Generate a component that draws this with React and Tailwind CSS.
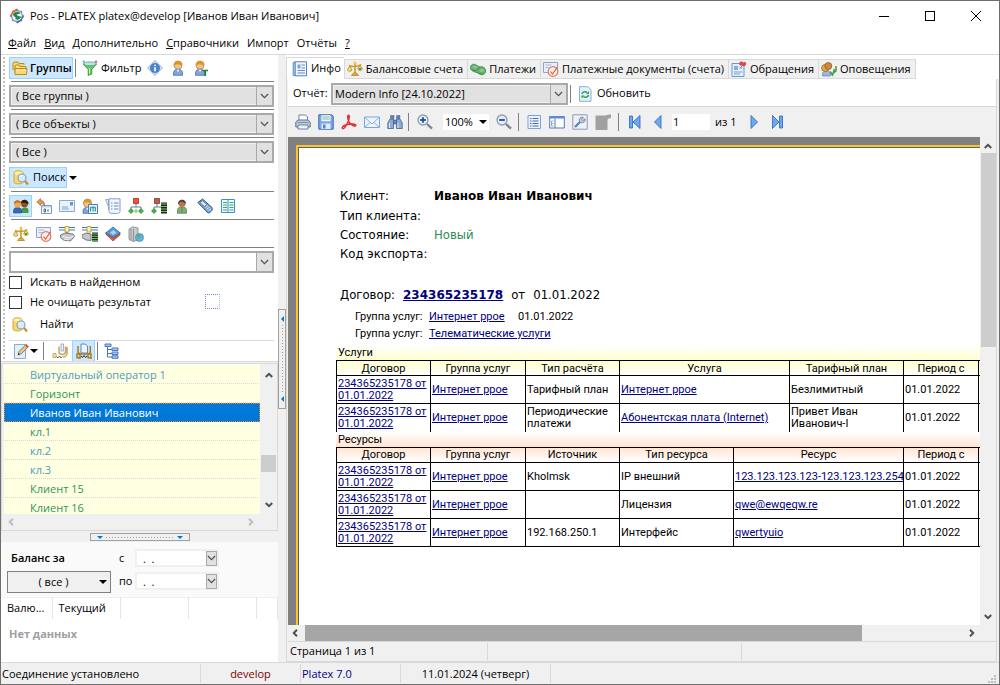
import React, { useState } from 'react';

const Icon = ({ children, size = 'w-4 h-4' }) => (
  <svg viewBox="0 0 16 16" className={`${size} shrink-0`} fill="none" aria-hidden="true">
    {children}
  </svg>
);

const Person = ({ x = 0, hair = '#d9962c', body = '#7fa6e0', face = '#f3c28c' }) => (
  <g transform={`translate(${x} 0)`}>
    <path d="M3.500 15.300V13c0-2.500 2-3.700 4.500-3.700s4.500 1.200 4.500 3.700v2.300z" fill={body} stroke="#3a5f9e" strokeWidth=".7" />
    <path d="M6.500 9.500 8 12l1.500-2.500z" fill="#fff" />
    <circle cx="8" cy="5.300" r="4" fill={face} stroke="#9a6a2a" strokeWidth=".6" />
    <path d="M4 6C3.500 2 6 .6 8.300.8 11.500 1 12.600 3 11.900 6.300 11 4.500 9 4.600 7 4.200 6 4.600 5 4.800 4 6z" fill={hair} />
  </g>
);

const icons = {
  app: (
    <>
      <path d="m8 .5 2.500 2.300h2.700v2.700L15.500 8l-2.300 2.500v2.700h-2.700L8 15.500l-2.500-2.300H2.800v-2.700L.5 8l2.300-2.500V2.800h2.700z" fill="#8a90b4" />
      <path d="M.8 8 4 3l4-2.500L7 6z" fill="#e2552a" />
      <path d="m15.200 8-3 5L8 15.500l1-5.500z" fill="#4a62b4" />
      <circle cx="8" cy="8" r="4.800" fill="#f4f7f4" />
      <path d="M4 6c2-3 6-3 7.500-.5-1.500 0-2.500 1-4 1 1 1.500 3 2 5 2-1 3-4 4-6.500 2.500 1-.5 1-1.500 0-2C5 8.500 4 7.500 4 6z" fill="#1d8a50" />
    </>
  ),
  folders: (
    <>
      <path d="M1 10V3l1-1h4l1 1.500h5V5" fill="#f9d66b" stroke="#b98a1d" />
      <path d="M3 12.500V6l1-1h3l1 1.500h6V8" fill="#fbe08a" stroke="#b98a1d" />
      <path d="M3 14.500V8.500h12l-.5 6z" fill="#fdd76a" stroke="#b98a1d" />
      <path d="M4.500 10h9" stroke="#fff3c0" />
    </>
  ),
  funnel: (
    <>
      <path d="M1 4h13.500L9.800 9.500v4.500L6.200 15.500V9.500z" fill="#6cc45c" stroke="#2f8a3a" strokeWidth=".8" />
      <ellipse cx="7.800" cy="3.800" rx="6.500" ry="1.900" fill="#b4e8f0" stroke="#3c9a6a" strokeWidth=".7" />
      <path d="M7.500 8v5.500" stroke="#c8f5b8" />
      <circle cx="14" cy="1.800" r="1.300" fill="#e457b8" />
      <circle cx="1.800" cy="1.500" r="1.100" fill="#4ab0e0" />
    </>
  ),
  info: (
    <>
      <path d="M8 .6 15.400 8 8 15.400.6 8z" fill="#d9e6f8" stroke="#8fa9d0" />
      <circle cx="8" cy="8" r="4.600" fill="#4c84d8" stroke="#2a5cab" strokeWidth=".6" />
      <path d="M8 4.700v1.400M8 7.200v4" stroke="#fff" strokeWidth="1.700" />
    </>
  ),
  user: <Person />,
  userT: (
    <>
      <Person x={-1} />
      <path d="M9.500 10.500h5.500M12.200 10.500V16" stroke="#118a28" strokeWidth="1.700" />
    </>
  ),
  search: (
    <>
      <path d="M1 3c0-3 9-3 9 0v9c0 2.500-9 2.500-9 0z" fill="#f8d868" stroke="#c79a25" strokeWidth=".8" />
      <ellipse cx="5.500" cy="3" rx="4" ry="1.500" fill="#fff0a8" />
      <circle cx="9" cy="8" r="4" fill="#d5ecfa" stroke="#7f9dba" strokeWidth="1.100" />
      <path d="M7 7c.5-1 1.500-1.500 2.500-1.300" stroke="#fff" />
      <path d="m12 11 3 3.500" stroke="#d58a2a" strokeWidth="2.200" />
    </>
  ),
  people: (
    <>
      <path d="M8 15v-2.500c0-2 1.500-3 4-3s3.500 1 3.500 3V15z" fill="#3f9c4a" />
      <circle cx="11.500" cy="6" r="3.400" fill="#915018" />
      <path d="M8 5c0-4.500 8-4.500 7.500 1.500-2-1.500-4.500-2-7.500-1.500z" fill="#2a1d18" />
      <path d="M.5 15v-2.500c0-2 1.500-3 4-3s4 1 4 3V15z" fill="#3467c0" stroke="#1e3f86" strokeWidth=".5" />
      <circle cx="4.500" cy="6" r="3.500" fill="#f0a950" />
      <path d="M.8 6C.5 1.500 7.800 1 8.200 5.500 5 4 3 4.500.8 6z" fill="#c86c14" />
    </>
  ),
  calBack: (
    <>
      <path d="M5.500 7.500h10v8h-10z" fill="#fff" stroke="#7a9ac8" />
      <path d="M6 8h9v1.500H6z" fill="#bcd0ef" />
      <path d="M8 11h1.500v3H8zM12 11v3" stroke="#345a9e" strokeWidth=".9" />
      <path d="M.8 4 4.500.6V2.500c3 0 4.300 2 4 5-.8-1.500-2-2-4-2v2z" fill="#d99a5e" stroke="#a8682c" strokeWidth=".7" />
    </>
  ),
  mail: (
    <>
      <path d="M.5 2.500h15v11H.5z" fill="#eaf2fd" stroke="#8aa8d0" />
      <path d="M11 4h3v3.500h-3z" fill="#5f97dc" />
      <path d="M3 9h6M3 11h7" stroke="#7aa3da" />
    </>
  ),
  userM: (
    <>
      <Person x={-2.500} />
      <path d="M6.500 6.500h9v9h-9z" fill="#eff6ff" stroke="#4878c0" />
      <path d="M8.500 13.500V9.500c1-.8 2-.6 2.500.3v3.700m0-4c1-.8 2.300-.5 2.300.5v3.500" stroke="#239a90" strokeWidth="1.200" />
    </>
  ),
  docs: (
    <>
      <path d="M.5 1.500h3v10l2 2z" fill="#e6edf8" stroke="#9aaed2" />
      <path d="M4 .8h11v12.500c0 2-2 2-2.500 2H6c-1.500 0-2-1-2-2z" fill="#f5f9ff" stroke="#7f9bcc" />
      <path d="M6 5h1.500M9 5h4.500M6 8h1.500M9 8h4.500M6 11h1.500M9 11h4.500" stroke="#5f84c2" />
    </>
  ),
  tree: (
    <>
      <path d="M8 6v3M3 12V9h10v3" stroke="#6b7c94" />
      <path d="M5.500.5h5v5h-5z" fill="#f0503a" stroke="#a82a1a" strokeWidth=".8" />
      <path d="m3 10 3 3-3 3-3-3zM13 10l3 3-3 3-3-3z" fill="#49a94c" />
      <path d="m8 10.500 2 2.500-2 2.500L6 13z" fill="#8fd28e" />
    </>
  ),
  treeList: (
    <>
      <path d="M6 6v3H3v3M6 9h4" stroke="#6b7c94" />
      <path d="M3.500.5h5v5h-5z" fill="#b5604a" stroke="#7a3524" strokeWidth=".8" />
      <path d="m3 10 3 3-3 3-3-3z" fill="#49a94c" />
      <path d="M10 4.500h6v11h-6z" fill="#222" />
      <path d="M10 6h6M10 8.500h6M10 11h6M10 13.500h6" stroke="#6fce5a" strokeWidth="1.200" />
    </>
  ),
  agent: (
    <>
      <path d="M3.500 15.300V12c0-2 1.500-3 4.500-3s4.500 1 4.500 3v3.300z" fill="#6fb873" stroke="#2c7434" strokeWidth=".6" />
      <path d="M8 9.500v5" stroke="#e04040" />
      <circle cx="8" cy="5.500" r="3.600" fill="#b8774c" />
      <path d="M4 6.500C3.500 0 12.500 0 12 6.500 11 4 9 4.500 6.500 3.800 5.500 4.500 5 5.500 4 6.500z" fill="#4a4240" />
    </>
  ),
  phone: (
    <>
      <path d="M.8 4.500 5.500 1l9.500 8.500c1 2-1 5-4 5.500z" fill="#7ba6d2" stroke="#33587f" />
      <path d="M3 4.500 5.500 2.800 10 6.500 7.500 8.500z" fill="#d8f0fa" stroke="#33587f" strokeWidth=".6" />
      <path d="m8.500 9.500 2.500-1.800M10 11l2.600-1.800M11.500 12.800l2.600-1.800" stroke="#dbe9f5" />
    </>
  ),
  sheet: (
    <>
      <path d="M1.500 1.500h13v13h-13z" fill="#f0faff" stroke="#3f8fd0" />
      <path d="M8 2v12" stroke="#3f8fd0" />
      <path d="M3 4.500h4M3 7h4M3 9.500h4M3 12h4M9.500 4.500h4M9.500 7h4M9.500 9.500h4M9.500 12h4" stroke="#38a860" />
    </>
  ),
  scales: (
    <>
      <path d="M8 1v12M2 4.500c3 1.500 9 1.500 12-1" stroke="#cf9a20" strokeWidth="1.600" />
      <path d="M4.500 14.500h7L9.500 12h-3z" fill="#e5b53a" stroke="#a87610" strokeWidth=".7" />
      <path d="M.5 9 2.800 5 5 9c-1 1.800-3.500 1.800-4.500 0zM10.500 8l2.500-4 2.500 4c-1 1.800-4 1.800-5 0z" fill="#f7dd84" stroke="#b58418" strokeWidth=".8" />
      <circle cx="8" cy="2" r="1.500" fill="#f2c64d" />
      <circle cx="13" cy="8" r="1.300" fill="#4e9e4a" />
    </>
  ),
  docCheck: (
    <>
      <path d="M.5 1.500h14v10H.5z" fill="#e9f0fb" stroke="#8ba4cc" />
      <path d="M2.500 4h6M2.500 6.500h4" stroke="#a5bce0" />
      <circle cx="10" cy="10.500" r="4.800" fill="#fff4f1" stroke="#e4765c" strokeWidth="1.200" />
      <path d="m7.500 10.500 2 2.500 5-7" stroke="#e4553a" strokeWidth="1.200" />
    </>
  ),
  bus: (
    <>
      <path d="M0 1.500h16M0 4h16" stroke="#3f76c0" strokeWidth="1.200" />
      <path d="M6 .5h4v5.500H6z" fill="#fdf0b0" stroke="#b8922a" strokeWidth=".8" />
      <path d="M8 6v3" stroke="#555" />
      <path d="m1.500 9 4.500-2 8 1 1.500 2.500-4 4.500-7-1-3-2.500z" fill="#c4c8cc" stroke="#666c74" strokeWidth=".9" />
      <path d="m3.500 10.500 7 1.500 4-2M5 13l5 1" stroke="#f5f5f5" />
    </>
  ),
  busList: (
    <>
      <path d="M0 1.500h16M0 4h16" stroke="#3f76c0" strokeWidth="1.200" />
      <path d="M5 .5h4v5.500H5z" fill="#fdf0b0" stroke="#b8922a" strokeWidth=".8" />
      <path d="m0 9 4-2 5 1v6.500l-5-.5-4-2.500z" fill="#c4c8cc" stroke="#666c74" strokeWidth=".9" />
      <path d="M10 6.500h6v9h-6z" fill="#222" />
      <path d="M10 8h6M10 10.300h6M10 12.600h6M10 14.800h6" stroke="#6fce5a" />
    </>
  ),
  cube: (
    <>
      <path d="m1 8.500 7 6.500 7-6V6.500L8 11 1 6z" fill="#d8573a" stroke="#9b3420" strokeWidth=".6" />
      <path d="M.8 7 8 1l7.200 6L8 11.500z" fill="#5a9ad8" stroke="#2d66a5" strokeWidth=".8" />
      <path d="m5 6.500 3.500-2.500 3 2.700-3.500 2.300z" fill="#a8d4f0" />
    </>
  ),
  serverWeb: (
    <>
      <path d="M1 3 5 .8 10 2v12L5 15.500l-4-2z" fill="#c9cbcb" stroke="#808484" strokeWidth=".8" />
      <path d="M3 3v11M5.500 3v12" stroke="#8f9494" />
      <circle cx="11.500" cy="11.500" r="4" fill="#62b4e8" stroke="#3785ba" strokeWidth=".7" />
      <path d="M9 10c1-1.500 3-2 4-.5-1 1-1 2-2 2 0 1 .5 2-.5 2.500z" fill="#58b05c" />
    </>
  ),
  edit: (
    <>
      <path d="M1.500 1.500h11v14h-11z" fill="#e4eefb" stroke="#8ea9d2" />
      <path d="m5 12 1-3.500 7-7 2.300 2.300-7 7z" fill="#f2c868" stroke="#5a6f96" strokeWidth=".9" />
      <path d="m12 2.500 1.300-1.300 2.300 2.300L14.300 5z" fill="#e04c48" />
      <path d="m5 12 .5-2 1.500 1.500z" fill="#333" />
    </>
  ),
  reel: (
    <>
      <path d="M9 1h2.500v7H9z" fill="#eef4fc" stroke="#8aa0c0" strokeWidth=".8" />
      <path d="M7 3.500v5c0 2 1 3 3.200 3s3.300-1 3.300-3v-5M15 4v6c0 2-1.500 4-4 4" stroke="#c9a565" strokeWidth="1.500" />
      <path d="M1 14.500V10.500h3v4z" fill="#f5e6b8" stroke="#c9a565" />
      <path d="m4.500 13.500 1.500 1.500 1.500-2 1.500 2 1.500-1.500" stroke="#444" strokeWidth=".8" />
    </>
  ),
  reelDoc: (
    <>
      <path d="M5 1h4l2.500 2v7H5z" fill="#eef4fc" stroke="#5c7cb5" strokeWidth=".9" />
      <path d="M2 3v5c0 2 1 3 3 3h7c1.500 0 2.300-1 2.300-3V3M1 14.500V11h3v4zM12 14.500V11h3v4z" stroke="#a87a1c" strokeWidth="1.500" />
      <path d="m5 13 1.500 1.500L8 12.500l1.500 2L11 13" stroke="#222" />
    </>
  ),
  treeBlue: (
    <>
      <path d="M3.500 4v10M3.500 6.500H8M3.500 10.500H8M3.500 14H8" stroke="#4a78bc" />
      <path d="M1 1h6v2.500H1zM8 5h6v2.500H8zM8 9h6v2.500H8zM8 12.800h6v2.500H8z" fill="#a9c8f2" stroke="#3d6db5" strokeWidth=".9" />
    </>
  ),
  book: (
    <>
      <path d="M2.500.8h12v14h-12z" fill="#f2f7fe" stroke="#5480bd" />
      <path d="M1 1.500h2.500v13H1z" fill="#8db2e6" stroke="#5480bd" strokeWidth=".6" />
      <path d="M5.500 3.500h3v4h-3z" fill="#7ba3dc" />
      <path d="M9.500 4h3.500M9.500 7h3.500M5.500 9.500h7.500M5.500 12h7.500" stroke="#5e88c8" />
    </>
  ),
  money: (
    <>
      <path d="M.3 6.500C.5 4 3 2.500 5 3.500l5 2.500c3-1 5.500 1 5.700 4-.2 3-3 4.500-5.200 3.500l-3.500-2C4 11 .5 9.500.3 6.500z" fill="#6cb070" stroke="#2d7a3c" strokeWidth=".7" />
      <path d="M1 8c1.500 1.500 4 2 5.500 1.500 1-.5 2-2.500 3.500-3M7 11c1.500 1.500 4 2.500 5.500 2" stroke="#3c8a48" strokeWidth=".8" />
      <ellipse cx="5" cy="6" rx="2.300" ry="1.300" fill="#8cc890" />
      <ellipse cx="11.800" cy="9.500" rx="2.300" ry="1.400" fill="#8cc890" />
    </>
  ),
  pinDoc: (
    <>
      <path d="M1 2.500h12v13H1z" fill="#e3effb" stroke="#6b97cc" />
      <path d="M3 5h4v4H3z" fill="#85aee0" />
      <path d="M8.500 7h3M3 11h8.500M3 13h6" stroke="#7f9fca" />
      <path d="m9 7 3-3" stroke="#888" />
      <path d="M8.500 2c0-2 3-2 3.500-.5C14 0 16 1.500 15 3.500 14 6 12 5 11 4.500 9 5 8 4 8.500 2z" fill="#de4a3e" />
    </>
  ),
  notify: (
    <>
      <path d="M1.500 15v-2c0-2 1.500-3 4-3s4 1 4 3v2z" fill="#9bb4ea" stroke="#5572b8" strokeWidth=".6" />
      <ellipse cx="4.300" cy="7" rx="3.800" ry="3.500" fill="#e8a840" stroke="#9a6420" strokeWidth=".7" />
      <circle cx="7.300" cy="5" r="3.500" fill="#c98a44" stroke="#8a5618" strokeWidth=".7" />
      <path d="m9 10.500 2.500 3.500 2-6M15 5v5l-2.500 2" stroke="#3f9d3c" strokeWidth="1.500" />
    </>
  ),
  refresh: (
    <>
      <path d="M2.500.7h8.300l3.200 3v11.600H2.500z" fill="#e4f0fd" stroke="#8aaedc" />
      <path d="M5 8c.5-2.500 3.500-3 5-1.500M11.500 9c-.5 2.500-3.500 3-5 1.500" stroke="#38a048" strokeWidth="1.500" />
      <path d="M9 8h3V5zM7.500 9.500h-3v3z" fill="#38a048" />
    </>
  ),
  print: (
    <>
      <path d="M4 7V1h6.500L12.500 3v4" fill="#fff" stroke="#6f87a8" />
      <path d="M.8 8 3 6h10l2.200 2v5H.8z" fill="#b9cbe0" stroke="#5f7797" />
      <path d="M3 11h10v4H3z" fill="#eef3fa" stroke="#6f87a8" />
      <path d="M2.500 8.500h11" stroke="#7f94ae" />
    </>
  ),
  save: (
    <>
      <path d="M.8.8h13l1.400 1.400v13H.8z" fill="#7fa8e6" stroke="#3a69b5" />
      <path d="M3.500 1.200h9v6h-9z" fill="#f1f6fd" />
      <path d="M4.500 3h7M4.500 5h7" stroke="#7cc08a" />
      <path d="M3.500 9.500h9v5.500h-9z" fill="#dfeafa" />
      <path d="M5 10.500h2.500v4H5z" fill="#4d84cf" />
    </>
  ),
  pdf: (
    <path d="M1.500 14.500c-1.800-2 5-5 10.500-4.500 4 .5 3 2.500 1 2C9.500 11 6.500 7 6.700 2.500 7 .3 8.500 1 8.300 3 8 7.500 3.500 15.500 1.500 14.500z" stroke="#e03030" strokeWidth="1.500" />
  ),
  letter: (
    <>
      <path d="M.5 3h15v10.500H.5z" fill="#edf4fe" stroke="#7fa6dc" />
      <path d="m1 3.500 7 6.500 7-6.500M1 13l5-4.500M15 13l-5-4.500" stroke="#7fa6dc" strokeWidth=".9" />
    </>
  ),
  binoculars: (
    <>
      <path d="M3 5h3.500v9.500H.8V9zM13 5H9.500v9.500h5.700V9z" fill="#8fabd0" stroke="#3c5f92" strokeWidth=".8" />
      <path d="M6.500 6h3v4h-3zM3.500 1.500h3.500v3H3.500zM9.500 1.500H13v3H9.500z" fill="#6284b4" stroke="#3c5f92" strokeWidth=".5" />
      <path d="M2.500 9v5M11 9v5" stroke="#d7e4f5" />
    </>
  ),
  zoomIn: (
    <>
      <circle cx="6" cy="6" r="5" fill="#e4eefa" stroke="#8f9cb0" strokeWidth="1.300" />
      <path d="M3.200 6h5.600M6 3.200v5.600" stroke="#24569c" strokeWidth="1.900" />
      <path d="m10 10 5 4.700" stroke="#7a8596" strokeWidth="2.400" />
    </>
  ),
  zoomOut: (
    <>
      <circle cx="6" cy="6" r="5" fill="#e4eefa" stroke="#8f9cb0" strokeWidth="1.300" />
      <path d="M3.200 6h5.600" stroke="#24569c" strokeWidth="1.900" />
      <path d="m10 10 5 4.700" stroke="#7a8596" strokeWidth="2.400" />
    </>
  ),
  fullPage: (
    <>
      <path d="M2 1.500h12.500v13H2z" fill="#e9f2fd" stroke="#7fa2d4" />
      <path d="M4 4.500h1.500M6.500 4.500h6M4 7h1.500M6.500 7h6M4 9.500h1.500M6.500 9.500h6M4 12h1.500M6.500 12h6" stroke="#466fae" />
    </>
  ),
  outline: (
    <>
      <path d="M.7 2.500h14.600v11.500H.7z" fill="#fff" stroke="#4b7cc0" />
      <path d="M.7 2h14.600v2.500H.7z" fill="#5b8dd6" />
      <path d="M6 4.500V14" stroke="#4b7cc0" />
      <path d="M2.500 7v5M2.500 7h2M2.500 9.500h2M2.500 12h2" stroke="#8795a8" strokeWidth=".8" />
    </>
  ),
  settings: (
    <>
      <path d="M.8.8h14.400v14.400H.8z" fill="#eef2f8" stroke="#8a9ab2" />
      <path d="m3 13 5-5" stroke="#5c82bc" strokeWidth="2.300" />
      <path d="M7.500 7.500c-1-3 1.500-5 4-4L9.800 5.300l1 1.200L13 4.800c.8 3-2 4.500-4.300 3.700z" fill="#c2cbd6" stroke="#66758a" strokeWidth=".8" />
    </>
  ),
  disabled: (
    <>
      <path d="M.5 1.500h12V16H.5z" fill="#a0a0a0" />
      <path d="M8 5c1-2.500 3.500-4.500 8-4.500V4c-2 0-3.500 1-5 3z" fill="#a0a0a0" />
    </>
  ),
  first: <path d="M2.500 2h3v12h-3zM13 1.500v13L6 8z" fill="#6ea8f0" stroke="#2a62ba" strokeWidth=".8" />,
  prev: <path d="M11 1.500v13L4.500 8z" fill="#6ea8f0" stroke="#2a62ba" strokeWidth=".8" />,
  next: <path d="M5 1.500v13L11.500 8z" fill="#6ea8f0" stroke="#2a62ba" strokeWidth=".8" />,
  last: <path d="M10.500 2h3v12h-3zM3.500 1.500v13L10 8z" fill="#6ea8f0" stroke="#2a62ba" strokeWidth=".8" />,
};

const Chevron = ({ className = '' }) => (
  <svg viewBox="0 0 10 6" className={`w-[9px] h-[6px] shrink-0 ${className}`} fill="none" aria-hidden="true">
    <path d="m1 .8 4 4 4-4" stroke="currentColor" strokeWidth="1.300" />
  </svg>
);

const Caret = () => (
  <svg viewBox="0 0 8 4" className="w-2 h-1 shrink-0" aria-hidden="true">
    <path d="M0 0h8L4 4z" fill="#000" />
  </svg>
);

const Arrow = ({ turn = '', color = 'text-[#505050]' }) => (
  <svg viewBox="0 0 8 8" className={`w-2 h-2 ${turn} ${color}`} fill="none" aria-hidden="true">
    <path d="m.8 6 3.200-3.200L7.200 6" stroke="currentColor" strokeWidth="2" />
  </svg>
);

const ComboBox = ({ id, label, options, className = '', inset = 'pl-1' }) => (
  <div className={`relative h-[22px] border-2 border-[#a9a9a9] bg-[#e1e1e1] ${className}`}>
    <select id={id} aria-label={label} className={`block w-full h-full appearance-none border border-[#f0f0f0] pr-5 outline-none ${inset}`}>
      {options.map((o) => (
        <option key={o}>{o}</option>
      ))}
    </select>
    <span className="pointer-events-none absolute right-0 top-0 flex h-full w-4 items-center justify-center border-l border-[#a9a9a9] bg-[#e1e1e1] text-[#505050]">
      <Chevron />
    </span>
  </div>
);

const Row = ({ children, height = 'h-7' }) => (
  <div className={`flex flex-col ${height}`}>
    <div className="flex flex-1 items-center">{children}</div>
    <div className="ml-[2px] h-px bg-[#808080]"></div>
  </div>
);

const ToolButton = ({ name, title, active, width = 'w-[23px]' }) => (
  <button
    title={title}
    aria-label={title}
    className={`flex h-[22px] ${width} shrink-0 items-center justify-center ${active ? 'border border-[#99d1ff] bg-[#cce8ff]' : ''}`}
  >
    <Icon>{icons[name]}</Icon>
  </button>
);

const Sep = () => <span className="h-[18px] w-px shrink-0 bg-[#808080]"></span>;

const menu = ['Файл', 'Вид', 'Дополнительно', 'Справочники', 'Импорт', 'Отчёты', '?'];
const underlined = ['Файл', 'Вид', 'Справочники', '?'];

const clients = [
  { name: 'Виртуальный оператор 1', color: 'text-[#4a9cc0]' },
  { name: 'Горизонт', color: 'text-[#2e9560]' },
  { name: 'Иванов Иван Иванович', color: 'text-[#2e9560]' },
  { name: 'кл.1', color: 'text-[#2e9560]' },
  { name: 'кл.2', color: 'text-[#4a9cc0]' },
  { name: 'кл.3', color: 'text-[#4a9cc0]' },
  { name: 'Клиент 15', color: 'text-[#2e9560]' },
  { name: 'Клиент 16', color: 'text-[#2e9560]' },
];

const tabs = [
  { icon: 'scales', label: 'Балансовые счета' },
  { icon: 'money', label: 'Платежи' },
  { icon: 'docCheck', label: 'Платежные документы (счета)' },
  { icon: 'pinDoc', label: 'Обращения' },
  { icon: 'notify', label: 'Оповещения' },
];

const searchTools = [
  ['calBack', 'По дате'],
  ['mail', 'По адресу'],
  ['userM', 'По менеджеру'],
  ['docs', 'По документу'],
  ['tree', 'По структуре'],
  ['treeList', 'По списку структуры'],
  ['agent', 'По агенту'],
  ['phone', 'По телефону'],
  ['sheet', 'По таблице'],
];

const objectTools = [
  ['scales', 'По счету'],
  ['docCheck', 'По платежу'],
  ['bus', 'По оборудованию'],
  ['busList', 'По списку оборудования'],
  ['cube', 'По услуге'],
  ['serverWeb', 'По ресурсу'],
];

const contract = '234365235178 от 01.01.2022';

const services = {
  title: 'Услуги',
  band: 'bg-gradient-to-b from-white to-[#ffffcc]',
  head: 'h-[15px] bg-gradient-to-b from-[#ffffcc] to-white',
  cols: ['w-[94px]', 'w-[95px]', 'w-[94px]', 'w-[170px]', 'w-[114px]', 'w-[75px]', 'w-[94px]'],
  columns: ['Договор', 'Группа услуг', 'Тип расчёта', 'Услуга', 'Тарифный план', 'Период с', ''],
  links: [0, 1, 3],
  rows: [
    [contract, 'Интернет ppoe', 'Тарифный план', 'Интернет ppoe', 'Безлимитный', '01.01.2022', ''],
    [contract, 'Интернет ppoe', 'Периодические платежи', 'Абонентская плата (Internet)', 'Привет Иван Иванович-I', '01.01.2022', ''],
  ],
};

const resources = {
  title: 'Ресурсы',
  band: 'bg-gradient-to-b from-white to-[#ffe4d0]',
  head: 'h-[15px] bg-gradient-to-b from-[#ffe4d0] to-white',
  cols: ['w-[94px]', 'w-[95px]', 'w-[94px]', 'w-[114px]', 'w-[170px]', 'w-[75px]', 'w-[94px]'],
  columns: ['Договор', 'Группа услуг', 'Источник', 'Тип ресурса', 'Ресурс', 'Период с', ''],
  links: [0, 1, 4],
  rows: [
    [contract, 'Интернет ppoe', 'Kholmsk', 'IP внешний', '123.123.123.123-123.123.123.254', '01.01.2022', ''],
    [contract, 'Интернет ppoe', '', 'Лицензия', 'qwe@ewqeqw.re', '01.01.2022', ''],
    [contract, 'Интернет ppoe', '192.168.250.1', 'Интерфейс', 'qwertyuio', '01.01.2022', ''],
  ],
};

const ReportTable = ({ data, open }) => (
  <section className="w-[736px]">
    <h3 className={`h-[15px] pl-[2px] pt-px leading-[14px] ${data.band}`}>{data.title}</h3>
    <table className={`w-full table-fixed border-collapse border border-black leading-3 ${open ? 'border-b-0' : ''}`}>
      <colgroup>
        {data.cols.map((c, i) => (
          <col key={i} className={c} />
        ))}
      </colgroup>
      <thead>
        <tr className={data.head}>
          {data.columns.map((c, i) => (
            <th key={i} className="border border-black p-0 pt-px font-normal">{c}</th>
          ))}
        </tr>
      </thead>
      <tbody>
        {data.rows.map((row, r) => (
          <tr key={r} className="h-7">
            {row.map((cell, i) => (
              <td key={i} className={`border border-black p-0 pl-px pt-px align-middle ${open && r === data.rows.length - 1 ? 'border-b-0' : ''}`}>
                {data.links.includes(i) ? (
                  <a href="#" className={`text-[#000080] underline ${i > 0 ? 'whitespace-nowrap' : ''}`}>{cell}</a>
                ) : (
                  cell
                )}
              </td>
            ))}
          </tr>
        ))}
      </tbody>
    </table>
  </section>
);

const TitleBar = () => (
  <header className="flex h-[30px] shrink-0 items-center bg-white pl-2">
    <Icon>{icons.app}</Icon>
    <h1 className="ml-[5px] flex-1 pt-px">Pos - PLATEX platex@develop [Иванов Иван Иванович]</h1>
    <button aria-label="Свернуть" className="flex h-full w-[46px] items-center justify-center">
      <span className="h-px w-[10px] bg-black"></span>
    </button>
    <button aria-label="Развернуть" className="flex h-full w-[46px] items-center justify-center">
      <span className="h-[10px] w-[10px] border border-black"></span>
    </button>
    <button aria-label="Закрыть" className="flex h-full w-[46px] items-center justify-center">
      <svg viewBox="0 0 10 10" className="h-[10px] w-[10px]" aria-hidden="true">
        <path d="m0 0 10 10M10 0 0 10" stroke="#000" />
      </svg>
    </button>
  </header>
);

const DateField = ({ label, id }) => (
  <div className="flex items-center">
    <label htmlFor={id} className="w-4">{label}</label>
    <div className="flex h-[18px] w-[84px] items-center border-2 border-[#f0f0f0] bg-white">
      <input id={id} defaultValue=".  ." className="h-full min-w-0 flex-1 bg-transparent pl-[6px] whitespace-pre outline-none" />
      <button aria-label={`Календарь ${label}`} className="flex h-[15px] w-[11px] items-center justify-center border border-[#a9a9a9] bg-[#e1e1e1] text-[#505050]">
        <Chevron />
      </button>
    </div>
  </div>
);

const LeftPanel = () => {
  const [selected, setSelected] = useState(2);

  return (
    <aside className="flex w-[277px] shrink-0 flex-col bg-white">
      {/* Toolbars */}
      <div className="flex">
        <div className="my-[2px] ml-[2px] mr-[4px] w-[2px] bg-[repeating-linear-gradient(to_bottom,#c0c0c0_0_2px,transparent_2px_4px)]"></div>
        <div className="mr-[4px] flex-1">
          <Row height="h-[27px]">
            <button className="flex h-[22px] w-[64px] items-center gap-[2px] border border-[#99d1ff] bg-[#cce8ff] pl-[2px] font-semibold">
              <Icon>{icons.folders}</Icon>Группы
            </button>
            <span className="ml-[2px] flex"><Sep /></span>
            <button className="ml-[6px] mr-[2px] flex h-[22px] items-center gap-[3px]">
              <Icon>{icons.funnel}</Icon>Фильтр
            </button>
            <ToolButton name="info" title="Информация" />
            <ToolButton name="user" title="Клиент" />
            <ToolButton name="userT" title="Тип клиента" />
          </Row>
          <Row><ComboBox label="Группы" options={['( Все группы )']} className="flex-1" /></Row>
          <Row><ComboBox label="Объекты" options={['( Все объекты )']} className="flex-1" /></Row>
          <div className="flex h-[26px] items-end pb-px"><ComboBox label="Состояния" options={['( Все )']} className="flex-1" /></div>
          <Row>
            <button className="flex h-[21px] w-[58px] items-center gap-1 border border-[#99d1ff] bg-[#cce8ff] pl-[3px]">
              <Icon>{icons.search}</Icon>Поиск
            </button>
            <button aria-label="Варианты поиска" className="ml-[2px] flex h-5 items-center"><Caret /></button>
          </Row>
          <Row>
            <ToolButton name="people" title="По клиенту" active />
            {searchTools.map(([name, title]) => (
              <ToolButton key={name} name={name} title={title} />
            ))}
          </Row>
          <Row>
            {objectTools.map(([name, title]) => (
              <ToolButton key={name} name={name} title={title} />
            ))}
          </Row>
          <div className="relative mt-[3px] h-[22px] border-2 border-[#a9a9a9] bg-white">
            <input aria-label="Строка поиска" className="h-full w-full px-1 pr-5 outline-none" />
            <button aria-label="История" className="absolute right-0 top-0 flex h-full w-4 items-center justify-center border-l border-[#a9a9a9] bg-[#e1e1e1] text-[#505050]">
              <Chevron />
            </button>
          </div>
          <div className="flex justify-between">
            <div>
              <label className="flex h-[19px] items-center gap-2">
                <input type="checkbox" className="h-[13px] w-[13px] appearance-none border border-[#333] bg-white checked:bg-[#0078d7]" />
                Искать в найденном
              </label>
              <label className="flex h-5 items-center gap-2">
                <input type="checkbox" className="h-[13px] w-[13px] appearance-none border border-[#333] bg-white checked:bg-[#0078d7]" />
                Не очищать результат
              </label>
            </div>
            <span className="mr-[54px] mt-[21px] h-[15px] w-[15px] border border-dotted border-[#7088c0] border-r-[#9cc4ea]"></span>
          </div>
          <button className="mb-[3px] flex h-[25px] items-center gap-3 pl-[3px]">
            <Icon>{icons.search}</Icon>Найти
          </button>
          <div className="flex h-[21px] items-center border-t border-[#d9d9d9]">
            <button aria-label="Изменить" className="flex h-[20px] items-center gap-px pl-1 pr-[5px]">
              <Icon>{icons.edit}</Icon><Caret />
            </button>
            <Sep />
            <span className="ml-1 flex gap-px">
              <ToolButton name="reel" title="Карточка" />
              <ToolButton name="reelDoc" title="Карточка клиента" active />
            </span>
            <span className="ml-[2px] flex"><Sep /></span>
            <ToolButton name="treeBlue" title="Дерево" width="w-[28px]" />
          </div>
        </div>
      </div>

      {/* Client list */}
      <div className="border-t border-[#d9d9d9] bg-[#f0f0f0] pt-px">
        <div className="border border-[#d9d9d9] pl-[2px]">
          <div className="flex h-[150px]">
            <ul role="listbox" aria-label="Клиенты" className="flex-1 overflow-hidden border-t border-white bg-[#ffffe1]">
              {clients.map((c, i) => (
                <li
                  key={c.name}
                  role="option"
                  aria-selected={selected === i}
                  onClick={() => setSelected(i)}
                  className={`h-[19px] border border-dotted pl-[25px] leading-[17px] ${
                    selected === i ? 'border-[#ff8728] bg-[#0078d7] text-white' : `border-transparent border-b-[#d8d8d8] ${c.color}`
                  }`}
                >
                  {c.name}
                </li>
              ))}
            </ul>
            <div className="flex w-[17px] flex-col items-center pt-[7px] pb-[5px]">
              <Arrow />
              <div className="flex-1"></div>
              <div className="h-[17px] w-[15px] bg-[#cdcdcd]"></div>
              <div className="h-[29px]"></div>
              <Arrow turn="rotate-180" />
            </div>
          </div>
          <div className="flex h-4 items-center justify-between pl-[3px] pr-[22px]">
            <Arrow turn="-rotate-90" color="text-[#bfbfbf]" />
            <Arrow turn="rotate-90" color="text-[#bfbfbf]" />
          </div>
        </div>
        <div className="flex h-[11px] justify-center">
          <button aria-label="Свернуть баланс" className="mt-[2px] flex h-2 w-[100px] items-center justify-between border border-[#a0a0a0] px-[6px]">
            <svg viewBox="0 0 6 3" className="h-[3px] w-[6px]"><path d="M0 0h6L3 3z" fill="#0078d7" /></svg>
            <span className="h-px w-[68px] bg-[repeating-linear-gradient(to_right,#a0a0a0_0_1px,transparent_1px_3px)]"></span>
            <svg viewBox="0 0 6 3" className="h-[3px] w-[6px]"><path d="M0 0h6L3 3z" fill="#0078d7" /></svg>
          </button>
        </div>
      </div>

      {/* Balance */}
      <div className="flex gap-2 bg-[#fafafa] px-[6px] pt-[7px] pb-[4px]">
        <div className="flex w-[104px] flex-col gap-[3px]">
          <div className="flex h-[19px] items-center pl-1 font-semibold">Баланс за</div>
          <button className="flex h-[22px] items-center border border-[#808080] bg-[#f0f0f0] pr-[3px]">
            <span className="flex-1 text-center">( все )</span>
            <Caret />
          </button>
        </div>
        <div className="flex flex-col gap-[5px]">
          <DateField id="from" label="с" />
          <DateField id="to" label="по" />
        </div>
      </div>
      <table className="w-full table-fixed border-t border-[#f0f0f0] text-left">
        <thead>
          <tr className="h-[21px]">
            <th className="w-[51px] border-r border-[#e5e5e5] p-0 pl-[6px] font-normal">Валю...</th>
            <th className="w-[68px] border-r border-[#e5e5e5] p-0 pl-[6px] font-normal">Текущий</th>
            <th className="w-[68px] border-r border-[#e5e5e5] p-0"></th>
            <th className="w-[68px] border-r border-[#e5e5e5] p-0"></th>
            <th className="border-r border-[#e5e5e5] p-0"></th>
          </tr>
        </thead>
      </table>
      <p className="flex-1 pl-2 pt-[7px] font-bold text-[#a0a0a0]">Нет данных</p>
    </aside>
  );
};

const Report = () => (
  <div className="flex min-h-0 flex-1">
    <div className="flex min-w-0 flex-1 overflow-hidden bg-[#808080] pl-2 pt-2">
      <article className="w-[800px] shrink-0 border-t-2 border-l-2 border-[#ffc22f] bg-white font-['Roboto',sans-serif] text-[11px]">
        <div className="h-full border-t border-l border-[#606060] pl-[37px] pt-[38px]">
          <dl className="ml-1 grid grid-cols-[94px_1fr] items-baseline font-['DejaVu_Sans_Condensed','DejaVu_Sans',sans-serif] text-[13px] leading-[19px]">
            <dt>Клиент:</dt>
            <dd className="font-['DejaVu_Sans',sans-serif] text-[12px] font-bold">Иванов Иван Иванович</dd>
            <dt className="whitespace-nowrap">Тип клиента:</dt>
            <dd></dd>
            <dt>Состояние:</dt>
            <dd className="text-[#2e8b57]">Новый</dd>
            <dt className="whitespace-nowrap">Код экспорта:</dt>
            <dd></dd>
          </dl>
          <div className="ml-1 mt-[22px] flex items-baseline gap-2 font-['DejaVu_Sans_Condensed','DejaVu_Sans',sans-serif] text-[13px] leading-[19px]">
            <span>Договор:</span>
            <a href="#" className="font-['DejaVu_Sans',sans-serif] text-[12px] font-bold text-[#000080] underline">234365235178</a>
            <span>от</span>
            <span>01.01.2022</span>
          </div>
          <div className="ml-[19px] mt-[3px] grid grid-cols-[74px_89px_1fr] leading-[17px]">
            <span>Группа услуг:</span>
            <a href="#" className="text-[#000080] underline">Интернет ppoe</a>
            <span>01.01.2022</span>
            <span>Группа услуг:</span>
            <a href="#" className="whitespace-nowrap text-[#000080] underline">Телематические услуги</a>
          </div>
          <div className="mt-[3px]">
            <ReportTable data={services} open />
            <ReportTable data={resources} />
          </div>
        </div>
      </article>
    </div>
    <div className="flex w-4 flex-col items-center pt-[5px] pb-[4px]">
      <Arrow />
      <div className="mt-[3px] h-[194px] w-[15px] bg-[#cdcdcd]"></div>
      <div className="flex-1"></div>
      <Arrow turn="rotate-180" />
    </div>
  </div>
);

const RightPanel = () => (
  <main className="flex min-w-0 flex-1 flex-col bg-[#f0f0f0]">
    <nav role="tablist" className="flex h-6 items-end bg-white">
      <button role="tab" aria-selected="true" className="flex h-[22px] items-center gap-[3px] border-t border-l border-[#d9d9d9] bg-white pl-[5px] pr-[3px]">
        <Icon>{icons.book}</Icon>Инфо
      </button>
      {tabs.map((t) => (
        <button key={t.label} role="tab" aria-selected="false" className="flex h-5 items-center gap-[3px] whitespace-nowrap border border-r-0 border-[#d9d9d9] bg-[#f0f0f0] pl-[2px] pr-[4px] last:border-r">
          <Icon>{icons[t.icon]}</Icon>{t.label}
        </button>
      ))}
    </nav>
    <div className="mr-[2px] flex min-h-0 flex-1 flex-col border border-t-0 border-[#d9d9d9] pl-px">
      <div className="flex h-7 shrink-0 items-center border-b border-[#d9d9d9] bg-white pl-[5px] pt-[2px]">
        <label htmlFor="report" className="w-[38px]">Отчёт:</label>
        <ComboBox id="report" options={['Modern Info [24.10.2022]']} className="w-[237px]" inset="pl-px" />
        <span className="ml-[2px] flex"><Sep /></span>
        <button className="ml-[6px] flex items-center gap-1">
          <Icon>{icons.refresh}</Icon>Обновить
        </button>
      </div>
      <div className="flex h-[30px] shrink-0 items-center pl-[3px]">
        <ToolButton name="print" title="Печать" />
        <ToolButton name="save" title="Сохранить" />
        <ToolButton name="pdf" title="Экспорт в PDF" />
        <ToolButton name="letter" title="Отправить" />
        <ToolButton name="binoculars" title="Найти" />
        <span className="mx-[2px] flex"><Sep /></span>
        <ToolButton name="zoomIn" title="Увеличить" width="w-[28px]" />
        <div className="relative ml-1 mr-[3px] h-4 w-[46px] bg-white">
          <select aria-label="Масштаб" className="block h-full w-full appearance-none bg-white pl-[2px] leading-4 outline-none">
            <option>100%</option>
          </select>
          <span className="pointer-events-none absolute right-[2px] top-0 flex h-full items-center"><Caret /></span>
        </div>
        <ToolButton name="zoomOut" title="Уменьшить" />
        <span className="ml-[3px] mr-[3px] flex"><Sep /></span>
        <ToolButton name="fullPage" title="Во весь экран" />
        <ToolButton name="outline" title="Структура" />
        <ToolButton name="settings" title="Параметры" />
        <ToolButton name="disabled" title="Правка" />
        <span className="mx-1 flex"><Sep /></span>
        <ToolButton name="first" title="Первая" />
        <ToolButton name="prev" title="Предыдущая" />
        <input aria-label="Номер страницы" defaultValue="1" className="ml-[3px] h-4 w-[38px] bg-white pl-px outline-none" />
        <span className="mx-[5px] w-[22px] whitespace-nowrap">из 1</span>
        <ToolButton name="next" title="Следующая" />
        <ToolButton name="last" title="Последняя" />
      </div>
      <Report />
      <div className="flex h-4 shrink-0 items-center pl-[3px] pr-[20px]">
        <Arrow turn="-rotate-90" />
        <div className="ml-[6px] flex h-full flex-1">
          <div className="h-full w-[84%] bg-[#a6a6a6]"></div>
        </div>
        <Arrow turn="rotate-90" />
      </div>
      <div className="flex h-5 shrink-0 items-stretch border-t border-[#d9d9d9] py-px pr-px">
        <span className="w-[200px] border-r border-[#d9d9d9] pl-[2px]">Страница 1 из 1</span>
        <span className="w-[254px] border-r border-[#d9d9d9]"></span>
        <span className="flex-1"></span>
      </div>
    </div>
  </main>
);

const App = () => (
  <div className="flex h-screen flex-col overflow-hidden border border-[#6e6e6e] bg-[#f0f0f0] font-['Open_Sans','Noto_Sans',sans-serif] text-[11px] text-black">
    <TitleBar />
    <nav className="flex h-[24px] shrink-0 items-center gap-2 border-b border-[#d9d9d9] bg-white pl-[7px] pt-[2px]">
      {menu.map((m) => (
        <button key={m}>
          {underlined.includes(m) ? <><u>{m[0]}</u>{m.slice(1)}</> : m}
        </button>
      ))}
    </nav>
    <div className="flex min-h-0 flex-1">
      <LeftPanel />
      <div className="flex w-2 shrink-0 items-center">
        <button aria-label="Свернуть панель" className="flex h-[100px] w-2 flex-col items-center justify-between border border-[#a0a0a0] py-[6px]">
          <svg viewBox="0 0 3 6" className="h-[6px] w-[3px]"><path d="M3 0v6L0 3z" fill="#0078d7" /></svg>
          <span className="h-[68px] w-px bg-[repeating-linear-gradient(to_bottom,#a0a0a0_0_1px,transparent_1px_3px)]"></span>
          <svg viewBox="0 0 3 6" className="h-[6px] w-[3px]"><path d="M3 0v6L0 3z" fill="#0078d7" /></svg>
        </button>
      </div>
      <RightPanel />
    </div>
    <footer className="flex h-[22px] shrink-0 items-stretch border-t border-[#d9d9d9] py-px leading-[19px]">
      <span className="w-[200px] border-r border-[#d9d9d9] pl-px">Соединение установлено</span>
      <span className="w-[100px] border-r border-[#d9d9d9] text-center text-[#800000]">develop</span>
      <span className="w-[100px] border-r border-[#d9d9d9] pl-px text-[#000080]">Platex 7.0</span>
      <span className="w-[150px] border-r border-[#d9d9d9] text-center">11.01.2024 (четверг)</span>
      <span className="flex flex-1 items-end justify-end pr-[3px]">
        <svg viewBox="0 0 8 8" className="h-2 w-2" fill="#bfbfbf" aria-hidden="true">
          <path d="M6 0h2v2H6zM3 3h2v2H3zM6 3h2v2H6zM0 6h2v2H0zM3 6h2v2H3zM6 6h2v2H6z" />
        </svg>
      </span>
    </footer>
  </div>
);

export default App;
